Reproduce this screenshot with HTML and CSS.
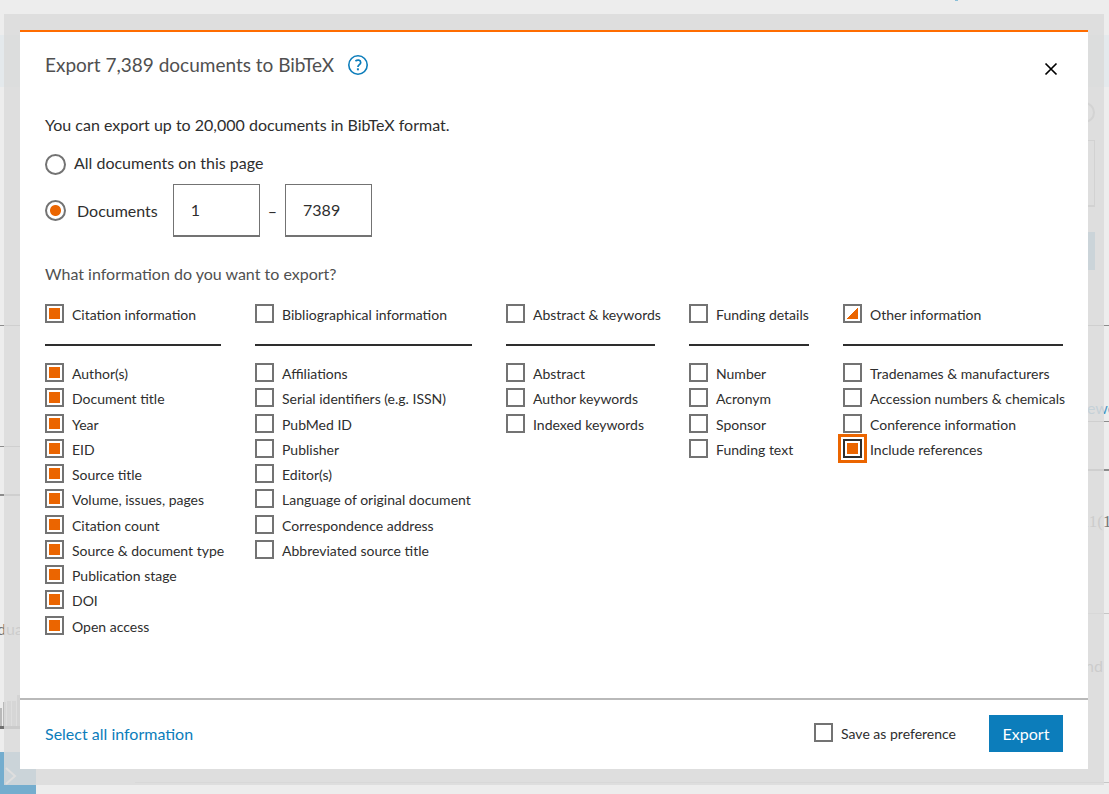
FILE: index.html
```html
<!DOCTYPE html>
<html lang="en">
<head>
<meta charset="utf-8">
<title>Export documents</title>
<meta name="viewport" content="width=device-width, initial-scale=1">
<link rel="stylesheet" href="styles.css">
</head>
<body>
<div class="backdrop" aria-hidden="true">
  <span class="spark"></span>
  <span class="band"></span>
  <span class="ring"></span>
  <span class="field"></span>
  <span class="chip"></span>
  <span class="rule rule-a"></span>
  <span class="rule rule-b"></span>
  <span class="rule rule-c"></span>
  <span class="rule rule-d"></span>
  <span class="rule rule-e"></span>
  <span class="rule rule-f"></span>
  <span class="rule rule-g"></span>
  <span class="word word-view">ewe</span>
  <span class="word word-count">11(1</span>
  <span class="word word-grad">dua</span>
  <span class="word word-and">nd</span>
  <svg class="bars" width="20" height="34" viewBox="0 0 20 34"><path fill="#b9b9b9" d="M0 13h2v18H0zM3 7h3v24H3z"/><path fill="#b9b9b9" d="M7 6h4v25H7zM12 6h4v25h-4z"/><path fill="#b0b0b0" d="M17 0h3v31h-3z"/><path fill="#707070" d="M0 31h20v3H0z"/></svg>
  <svg class="expander" width="36" height="42" viewBox="0 0 36 42"><path fill="#74adce" d="M0 0h36v42H0z"/><path fill="none" stroke="#eee" stroke-width="2" d="m6 16 9 8-9 8"/></svg>
</div>

<main class="frame">
  <form class="dialog" role="dialog" aria-labelledby="title">
    <div class="body">
      <header class="head">
        <h1 id="title">Export 7,389 documents to BibTeX</h1>
        <button type="button" class="icon-button help" aria-label="Help">
          <svg width="20" height="20" viewBox="0 0 20 20" fill="none" stroke="#0c7dbb"><circle cx="10" cy="10" r="9.200" stroke-width="1.600"/><path stroke-width="1.700" d="M7.400 6c2-1.400 5.300-1.200 5.300 1.400 0 2.200-2.800 2.200-2.800 4.600"/><path stroke-width="2" d="M9.900 13.300v2"/></svg>
        </button>
        <button type="button" class="icon-button close" aria-label="Close">
          <svg width="14" height="14" viewBox="0 0 14 14" fill="none" stroke="#000" stroke-width="1.700"><path d="M1.500 1.500l11 11M12.500 1.500l-11 11"/></svg>
        </button>
      </header>

      <p class="intro">You can export up to 20,000 documents in BibTeX format.</p>

      <div class="choice choice-all">
        <input type="radio" name="scope" id="scope-all">
        <label for="scope-all">All documents on this page</label>
      </div>
      <div class="choice choice-range">
        <input type="radio" name="scope" id="scope-range" checked>
        <label for="scope-range">Documents</label>
        <input type="text" class="number" aria-label="First document" value="1">
        <span class="dash">–</span>
        <input type="text" class="number" aria-label="Last document" value="7389">
      </div>

      <h2>What information do you want to export?</h2>

      <div class="columns">
        <section>
          <label class="option group"><input type="checkbox" checked>Citation information</label>
          <ul>
            <li><label class="option"><input type="checkbox" checked>Author(s)</label></li>
            <li><label class="option"><input type="checkbox" checked>Document title</label></li>
            <li><label class="option"><input type="checkbox" checked>Year</label></li>
            <li><label class="option"><input type="checkbox" checked>EID</label></li>
            <li><label class="option"><input type="checkbox" checked>Source title</label></li>
            <li><label class="option"><input type="checkbox" checked>Volume, issues, pages</label></li>
            <li><label class="option"><input type="checkbox" checked>Citation count</label></li>
            <li><label class="option"><input type="checkbox" checked>Source &amp; document type</label></li>
            <li><label class="option"><input type="checkbox" checked>Publication stage</label></li>
            <li><label class="option"><input type="checkbox" checked>DOI</label></li>
            <li><label class="option"><input type="checkbox" checked>Open access</label></li>
          </ul>
        </section>
        <section>
          <label class="option group"><input type="checkbox">Bibliographical information</label>
          <ul>
            <li><label class="option"><input type="checkbox">Affiliations</label></li>
            <li><label class="option"><input type="checkbox">Serial identifiers (e.g. ISSN)</label></li>
            <li><label class="option"><input type="checkbox">PubMed ID</label></li>
            <li><label class="option"><input type="checkbox">Publisher</label></li>
            <li><label class="option"><input type="checkbox">Editor(s)</label></li>
            <li><label class="option"><input type="checkbox">Language of original document</label></li>
            <li><label class="option"><input type="checkbox">Correspondence address</label></li>
            <li><label class="option"><input type="checkbox">Abbreviated source title</label></li>
          </ul>
        </section>
        <section>
          <label class="option group"><input type="checkbox">Abstract &amp; keywords</label>
          <ul>
            <li><label class="option"><input type="checkbox">Abstract</label></li>
            <li><label class="option"><input type="checkbox">Author keywords</label></li>
            <li><label class="option"><input type="checkbox">Indexed keywords</label></li>
          </ul>
        </section>
        <section>
          <label class="option group"><input type="checkbox">Funding details</label>
          <ul>
            <li><label class="option"><input type="checkbox">Number</label></li>
            <li><label class="option"><input type="checkbox">Acronym</label></li>
            <li><label class="option"><input type="checkbox">Sponsor</label></li>
            <li><label class="option"><input type="checkbox">Funding text</label></li>
          </ul>
        </section>
        <section>
          <label class="option group"><input type="checkbox" class="partial" aria-checked="mixed">Other information</label>
          <ul>
            <li><label class="option"><input type="checkbox">Tradenames &amp; manufacturers</label></li>
            <li><label class="option"><input type="checkbox">Accession numbers &amp; chemicals</label></li>
            <li><label class="option"><input type="checkbox">Conference information</label></li>
            <li><label class="option"><input type="checkbox" class="focused" checked>Include references</label></li>
          </ul>
        </section>
      </div>
    </div>

    <footer class="foot">
      <a href="#all">Select all information</a>
      <label class="option save"><input type="checkbox">Save as preference</label>
      <button type="submit" class="export">Export</button>
    </footer>
  </form>
</main>
</body>
</html>
```
FILE: styles.css
```css
* { box-sizing: border-box; }

body {
  margin: 0;
  min-height: 100vh;
  padding: 14px 5px 9px 4px;
  display: flex;
  background: #ededed;
  color: #2e2e2e;
  font: 16px/24px Lato, "Open Sans", sans-serif;
}

input, button { font: inherit; color: inherit; margin: 0; }

/* Dimmed page behind the dialog */
.backdrop { position: absolute; inset: 0; overflow: hidden; }
.backdrop > * { position: absolute; }
.spark { top: 0; left: 955px; width: 3px; height: 1px; background: #8abfd8; }
.band { top: 35px; left: 0; right: 0; height: 52px; background: #e4e9ec; }
.ring { top: 102px; right: 14px; width: 21px; height: 21px; border: 2px solid #a5a5a5; border-radius: 50%; }
.field { top: 140px; right: 14px; width: 80px; height: 67px; border: 1px solid #a0a0a0; border-bottom-width: 2px; }
.chip { top: 232px; right: 14px; width: 80px; height: 38px; background: #74adce; }
.rule { height: 1px; background: #8c8c8c; }
.rule-a { top: 325px; left: 0; right: 0; }
.rule-b { top: 446px; left: 0; width: 40px; }
.rule-c { top: 494px; left: 0; width: 40px; height: 2px; }
.rule-d { top: 421px; right: 0; width: 40px; }
.rule-e { top: 469px; right: 0; width: 40px; height: 2px; }
.rule-f { top: 613px; right: 0; width: 40px; background: #c6c6c6; }
.rule-g { top: 782px; left: 135px; right: 0; background: #c6c6c6; }
.word { color: #777; white-space: nowrap; }
.word-view { top: 396px; left: 1087px; color: #4a97c4; }
.word-count { top: 510px; left: 1081px; font-family: "Liberation Serif", serif; font-size: 17px; }
.word-grad { top: 617px; left: -3px; }
.word-and { top: 654px; left: 1085px; }
.bars { top: 695px; left: 0; }
.expander { top: 752px; left: 0; }

.frame {
  position: relative;
  flex: 1;
  display: flex;
  padding: 16px;
  background: rgba(218, 218, 218, .85);
}

.dialog {
  flex: 1;
  display: flex;
  flex-direction: column;
  background: #fff;
  border-top: 2px solid #ff6c00;
}

.body { flex: 1; padding: 20px 25px 24px; }

.head { display: flex; align-items: center; }
h1 { margin: 0; font-size: 19px; line-height: 26px; font-weight: 400; color: #505050; }
.icon-button { padding: 0; border: 0; background: none; display: flex; cursor: pointer; }
.help { margin-left: 14px; }
.close { margin: 8px 5px 0 auto; }

.intro { margin: 35px 0 0; }

.choice { display: flex; align-items: center; gap: 8px; }
.choice-all { margin-top: 14px; }
.choice-all label { padding-bottom: 3px; }
.choice-range { margin-top: 6px; }
.choice-range label { padding: 0 7px 0 3px; }

input[type="radio"] {
  appearance: none;
  width: 21px;
  height: 21px;
  border: 2px solid #737373;
  border-radius: 50%;
}
input[type="radio"]:checked { background: radial-gradient(circle, #eb6500 5px, #fff 6px); }

.number {
  width: 87px;
  height: 53px;
  padding: 0 17px 2px;
  border: 1px solid #737373;
  border-bottom-width: 2px;
  background: #fff;
}

h2 { margin: 25px 0 0; font-size: 16px; line-height: 24px; font-weight: 400; color: #505050; }

.columns {
  display: grid;
  grid-template-columns: 176fr 217fr 149fr 120fr 220fr;
  column-gap: 34px;
  margin-top: 16px;
}
.columns section { min-width: 0; }

.option {
  display: flex;
  align-items: center;
  gap: 8px;
  font-size: 14px;
  line-height: 25px;
  white-space: nowrap;
}
.group { padding-bottom: 17px; border-bottom: 2px solid #2e2e2e; }

ul {
  display: grid;
  grid-template-rows: repeat(11, 1fr);
  min-height: 278px;
  margin: 15px 0 0;
  padding: 0;
  list-style: none;
}

input[type="checkbox"] {
  appearance: none;
  flex: none;
  width: 19px;
  height: 19px;
  margin-bottom: 2px;
  padding: 2px;
  border: 2px solid #737373;
  background: #fff content-box;
}
input[type="checkbox"]:checked { background-color: #eb6500; }
input[type="checkbox"].partial { background: linear-gradient(135deg, #fff 50%, #eb6500 50%) content-box; }
input[type="checkbox"].focused { border-color: #2e2e2e; outline: 3px solid #eb6500; outline-offset: 2px; }

.foot {
  display: flex;
  align-items: center;
  padding: 15px 25px 17px;
  border-top: 2px solid #b9b9b9;
}
.foot a { color: #0c7dbb; text-decoration: none; }
.save { margin-left: auto; }
.export {
  margin-left: 33px;
  width: 74px;
  height: 37px;
  padding: 0;
  border: 0;
  background: #0c7dbb;
  color: #fff;
}
```
